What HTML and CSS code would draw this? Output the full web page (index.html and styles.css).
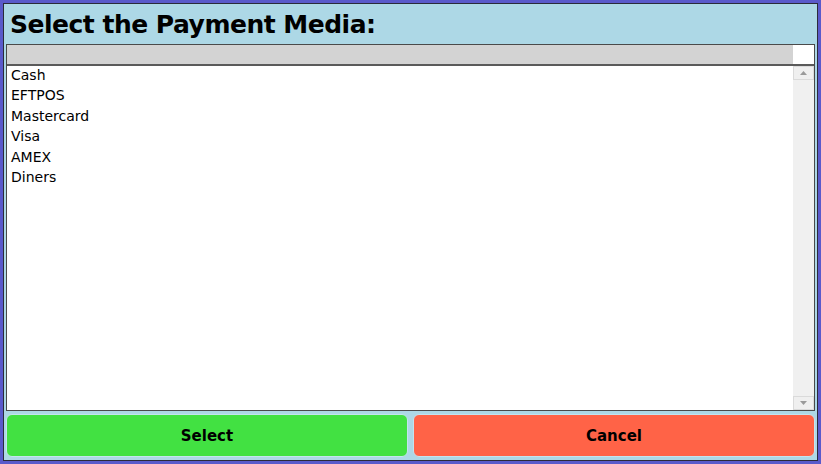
FILE: index.html
```html
<!DOCTYPE html>
<html>
<head>
<meta charset="utf-8">
<link rel="stylesheet" href="styles.css">
</head>
<body>
<div class="frame">
  <div class="inner">
    <h1 class="title">Select the Payment Media:</h1>
    <div class="listbox">
      <div class="list-head">
        <div class="head-cell"></div>
        <div class="head-corner"></div>
      </div>
      <div class="list-body">
        <ul class="items">
          <li>Cash</li>
          <li>EFTPOS</li>
          <li>Mastercard</li>
          <li>Visa</li>
          <li>AMEX</li>
          <li>Diners</li>
        </ul>
        <div class="scrollbar">
          <div class="sb-btn"><svg width="7" height="4" viewBox="0 0 7 4"><path d="M0 4 L3.5 0 L7 4 Z" fill="#9a9a9a"/></svg></div>
          <div class="sb-track"></div>
          <div class="sb-btn"><svg width="7" height="4" viewBox="0 0 7 4"><path d="M0 0 L7 0 L3.5 4 Z" fill="#9a9a9a"/></svg></div>
        </div>
      </div>
    </div>
    <div class="actions">
      <button class="btn btn-select">Select</button>
      <button class="btn btn-cancel">Cancel</button>
    </div>
  </div>
</div>
</body>
</html>
```

FILE: styles.css
```css
html, body {
  margin: 0;
  padding: 0;
  width: 821px;
  height: 464px;
  overflow: hidden;
  background: #add8e6;
}
.frame {
  width: 821px;
  height: 464px;
  box-sizing: border-box;
  border: 3px solid #5a5acb;
}
.inner {
  height: 100%;
  box-sizing: border-box;
  border: 1px solid #2b2b3a;
  background: #add8e6;
  display: flex;
  flex-direction: column;
  padding: 0 2px;
}
.title {
  margin: 0;
  height: 40px;
  box-sizing: border-box;
  padding: 6px 0 0 4px;
  font-family: "DejaVu Sans", sans-serif;
  font-weight: bold;
  font-size: 25px;
  letter-spacing: -0.5px;
  line-height: 29px;
  color: #000;
}
.listbox {
  height: 367px;
  box-sizing: border-box;
  border: 1px solid #4a4a4a;
  background: #fff;
  display: flex;
  flex-direction: column;
}
.list-head {
  display: flex;
  height: 21px;
  border-bottom: 2px solid #5a5a5a;
  box-sizing: border-box;
}
.head-cell {
  flex: 1;
  background: #d3d3d3;
}
.head-corner {
  width: 21px;
  background: #fff;
}
.list-body {
  flex: 1;
  display: flex;
  min-height: 0;
}
.items {
  flex: 1;
  list-style: none;
  margin: 0;
  padding: 0 0 0 4px;
  font-family: "DejaVu Sans", sans-serif;
  font-size: 14px;
  color: #000;
}
.items li {
  height: 20.4px;
  line-height: 18px;
}
.scrollbar {
  width: 21px;
  background: #f0f0f0;
  display: flex;
  flex-direction: column;
}
.sb-btn {
  height: 14px;
  display: flex;
  align-items: center;
  justify-content: center;
  background: #efefef;
  border: 1px solid #dadada;
  box-sizing: border-box;
}
.sb-track {
  flex: 1;
}
.actions {
  flex: 1;
  display: flex;
  gap: 5px;
  padding: 3px 0;
}
.btn {
  flex: 1;
  border: 1px solid #c4e4ee;
  border-radius: 6px;
  font-family: "DejaVu Sans", sans-serif;
  font-weight: bold;
  font-size: 15px;
  color: #000;
  padding: 0;
}
.btn-select {
  background: #42e142;
}
.btn-cancel {
  background: #ff6347;
}
```
